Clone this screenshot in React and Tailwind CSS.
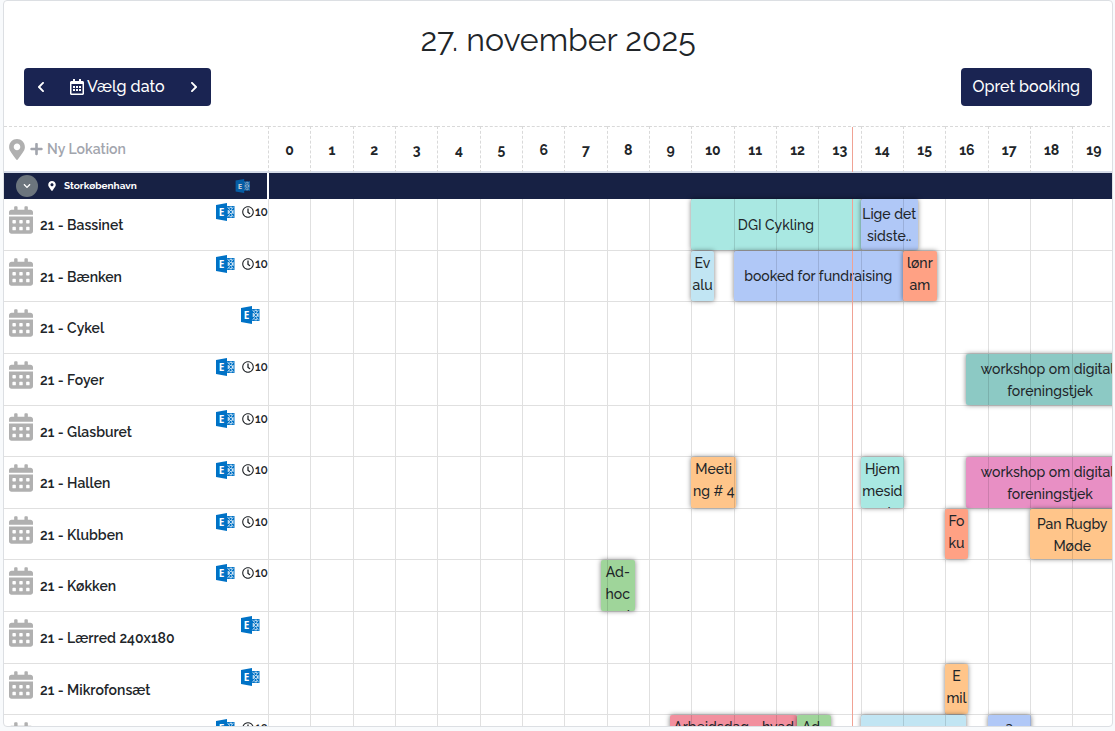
import React from 'react';
import {
  FaCalendarAlt,
  FaChevronDown,
  FaChevronLeft,
  FaChevronRight,
  FaMapMarkerAlt,
  FaPlus,
  FaRegCalendarAlt,
  FaRegClock,
} from 'react-icons/fa';

const HOURS = Array.from({ length: 24 }, (_, hour) => hour);

// Current time in hours, used for the red marker
const NOW = 13.78;

const COLORS = {
  mint: 'bg-[#a9e8e2]',
  blue: 'bg-[#b0c8f7]',
  sky: 'bg-[#c1e5f3]',
  coral: 'bg-[#ffa184]',
  teal: 'bg-[#8cc9c4]',
  orange: 'bg-[#ffc58a]',
  pink: 'bg-[#e88fc4]',
  green: 'bg-[#9fd59a]',
  red: 'bg-[#f28f9e]',
};

const locations = [
  {
    name: '21 - Bassinet',
    minutes: 10,
    bookings: [
      { title: 'DGI Cykling', start: 10, length: 4, color: 'mint' },
      { title: 'Lige det\nsidste..', start: 14, length: 1.35, color: 'blue' },
    ],
  },
  {
    name: '21 - Bænken',
    minutes: 10,
    bookings: [
      { title: 'Ev\nalu\neri', start: 10, length: 0.53, color: 'sky' },
      { title: 'booked for fundraising', start: 11, length: 4, color: 'blue' },
      { title: 'lønr\nam\nme', start: 15, length: 0.8, color: 'coral' },
    ],
  },
  { name: '21 - Cykel', bookings: [] },
  {
    name: '21 - Foyer',
    minutes: 10,
    bookings: [{ title: 'workshop om digitalt\nforeningstjek', start: 16.5, length: 3.95, color: 'teal' }],
  },
  { name: '21 - Glasburet', minutes: 10, bookings: [] },
  {
    name: '21 - Hallen',
    minutes: 10,
    bookings: [
      { title: 'Meeti\nng # 4\n..', start: 10, length: 1.06, color: 'orange' },
      { title: 'Hjem\nmesid\ned', start: 14, length: 1.03, color: 'mint' },
      { title: 'workshop om digitalt\nforeningstjek', start: 16.5, length: 3.95, color: 'pink' },
    ],
  },
  {
    name: '21 - Klubben',
    minutes: 10,
    bookings: [
      { title: 'Fo\nku\ns', start: 16, length: 0.53, color: 'coral' },
      { title: 'Pan Rugby\nMøde', start: 18, length: 2, color: 'orange' },
    ],
  },
  {
    name: '21 - Køkken',
    minutes: 10,
    bookings: [{ title: 'Ad-\nhoc\nmøi', start: 7.86, length: 0.81, color: 'green' }],
  },
  { name: '21 - Lærred 240x180', bookings: [] },
  {
    name: '21 - Mikrofonsæt',
    bookings: [{ title: 'E\nmil\nkkl', start: 16, length: 0.53, color: 'orange' }],
  },
  {
    name: '21 - Mødelokale',
    minutes: 10,
    bookings: [
      { title: 'Arbejdsdag - hvad\n..\n..', start: 9.5, length: 3, color: 'red' },
      { title: 'Ad-\nhoc\n..', start: 12.5, length: 0.8, color: 'green' },
      { title: '', start: 14, length: 2.5, color: 'sky' },
      { title: 'a\n..\n..', start: 17, length: 1.03, color: 'blue' },
    ],
  },
];

const ExchangeIcon = ({ className }) => (
  <svg className={className} viewBox="0 0 38 36" aria-hidden="true">
    <path d="M21 6h16v24H21z" fill="#0072c6" />
    <path
      d="M23 8.500l5 4.500M35 8.500l-5 4.500M23 27.500l5-4.500M35 27.500l-5-4.500M24.500 14v8M34 14v8M25.500 18l4-4 4 4-4 4zM27 8.500h5M27 27.500h5"
      fill="none"
      stroke="#fff"
      strokeWidth="1.8"
    />
    <path d="M0 4l22-4v36L0 32z" fill="#0072c6" />
    <text x="11" y="25" textAnchor="middle" fontSize="20" fontWeight="700" fontFamily="Open Sans, sans-serif" fill="#fff">
      E
    </text>
  </svg>
);

// Thin red line that shows the current time inside an hour cell
const NowMarker = () => (
  <span
    className="absolute top-0 -bottom-px w-px bg-[#f0a294]"
    style={{ left: `${(NOW % 1) * 100}%` }}
  />
);

// A booking starts on the hour line itself, so the cell border counts as part of the hour
const Booking = ({ booking }) => {
  const offset = booking.start % 1;

  return (
    <div
      className={`absolute inset-y-0 flex justify-center overflow-hidden rounded-xs pt-px text-center text-sm leading-[22px] font-medium whitespace-pre shadow-[0_0_5px_rgba(0,0,0,0.5)] [align-items:safe_center] ${COLORS[booking.color]}`}
      style={{
        left: `calc((100% + 1px) * ${offset} - 1px)`,
        width: `calc((100% + 1px) * ${booking.length})`,
      }}
    >
      {booking.title}
    </div>
  );
};

const LocationRow = ({ location }) => (
  <tr>
    <th scope="row" className="border-b border-black/12 p-0 pl-[5px] text-left align-top font-semibold">
      <div className="flex items-start">
        <FaCalendarAlt className="mt-[7px] h-7 w-6 shrink-0 text-[#b0b0b0]" />
        <span className="mt-[14px] ml-[7px] flex-1 text-sm leading-6">{location.name}</span>
        <ExchangeIcon className="mt-1 mr-[7px] h-[18px] w-[19px]" />
        {location.minutes && (
          <span className="mt-1 flex items-center text-xs leading-[18px]">
            <FaRegClock className="mr-px h-3 w-3" />
            {location.minutes}
          </span>
        )}
        {!location.minutes && <span className="w-px" />}
      </div>
    </th>
    {HOURS.map((hour) => (
      <td key={hour} className="relative border-b border-l border-black/12 p-0">
        {location.bookings
          .filter((booking) => Math.floor(booking.start) === hour)
          .map((booking) => (
            <Booking key={booking.start} booking={booking} />
          ))}
        {Math.floor(NOW) === hour && <NowMarker />}
      </td>
    ))}
  </tr>
);

const App = () => {
  return (
    <div className="flex h-screen flex-col bg-[#f8fafc] pr-[2px] pb-1 pl-[3px] font-['Raleway','Lato',sans-serif] text-[#212529]">
      <main className="flex min-h-0 flex-1 flex-col overflow-hidden rounded border border-[#dcdfe3] bg-white">
        <h1 className="pt-5 text-center text-[32px] leading-[38px]">27. november 2025</h1>

        {/* Toolbar */}
        <div className="flex items-center justify-between px-5 pt-[9px] pb-5 text-base text-white">
          <div className="flex h-[38px] overflow-hidden rounded bg-[#1a2452]">
            <button type="button" aria-label="Forrige dag" className="px-3">
              <FaChevronLeft className="h-3 w-[10px]" />
            </button>
            <button type="button" className="flex items-center gap-[3px] px-3 font-medium">
              <FaRegCalendarAlt className="h-4 w-[14px]" />
              Vælg dato
            </button>
            <button type="button" aria-label="Næste dag" className="px-3">
              <FaChevronRight className="h-3 w-[10px]" />
            </button>
          </div>
          <button type="button" className="h-[38px] rounded bg-[#1a2452] px-3 font-medium">
            Opret booking
          </button>
        </div>

        {/* Timeline */}
        <div className="min-h-0 flex-1 overflow-auto [scrollbar-width:none]">
          <table className="h-[641px] w-full min-w-[1280px] table-fixed border-separate border-spacing-0">
            <colgroup>
              <col className="w-[264px]" />
              {HOURS.map((hour) => (
                <col key={hour} />
              ))}
            </colgroup>
            <thead>
              <tr className="h-[47px]">
                <th className="border-t border-b-2 border-t-black/15 border-b-[#d6dce8] p-0 pl-[5px] [border-top-style:dashed]">
                  <button type="button" className="flex items-center text-sm font-semibold text-[#a2a5ad]">
                    <FaMapMarkerAlt className="mr-[5px] h-[21px] w-4 text-[#b0b0b0]" />
                    <FaPlus className="mr-1 h-[14px] w-[13px]" />
                    Ny Lokation
                  </button>
                </th>
                {HOURS.map((hour) => (
                  <th
                    key={hour}
                    scope="col"
                    className="relative border-t border-b-2 border-l border-t-black/15 border-b-[#d6dce8] border-l-black/15 p-0 pt-[2px] text-sm font-bold [border-left-style:dashed] [border-top-style:dashed]"
                  >
                    {hour}
                    {Math.floor(NOW) === hour && <NowMarker />}
                  </th>
                ))}
              </tr>
            </thead>
            <tbody>
              <tr className="h-[26px]">
                <th scope="rowgroup" className="border-r border-white bg-[#172144] p-0 pl-3 text-white">
                  <div className="flex items-center text-[10px] leading-4">
                    <button
                      type="button"
                      aria-label="Skjul lokationer"
                      className="flex h-[22px] w-[22px] items-center justify-center rounded-full bg-[#6c757d]"
                    >
                      <FaChevronDown className="h-2 w-2" />
                    </button>
                    <FaMapMarkerAlt className="mr-2 ml-[10px] h-[10px] w-2" />
                    <span className="flex-1 text-left">Storkøbenhavn</span>
                    <ExchangeIcon className="mr-4 h-[14px] w-4 opacity-75" />
                  </div>
                </th>
                <td colSpan={24} className="border-l border-white bg-[#172144] p-0" />
              </tr>
              {locations.map((location) => (
                <LocationRow key={location.name} location={location} />
              ))}
            </tbody>
          </table>
        </div>
      </main>
    </div>
  );
};

export default App;
